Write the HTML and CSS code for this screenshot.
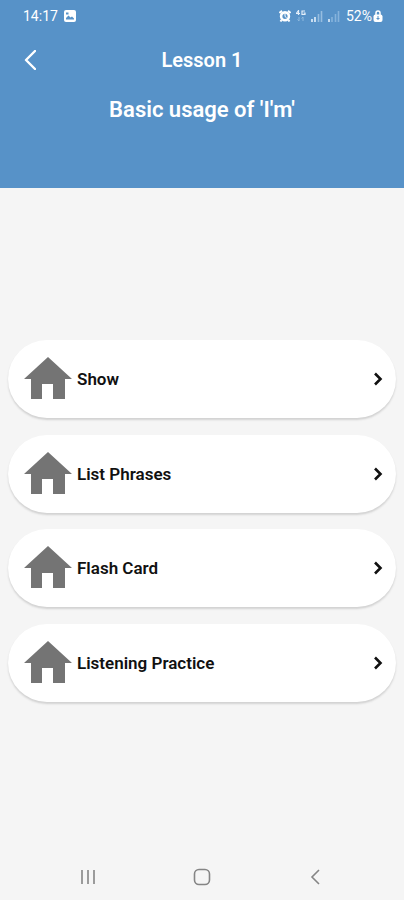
FILE: index.html
```
<!DOCTYPE html>
<html lang="en">
<head>
<meta charset="utf-8">
<meta name="viewport" content="width=device-width, initial-scale=1">
<title>Lesson 1</title>
<link rel="stylesheet" href="styles.css">
</head>
<body>
<svg class="defs" aria-hidden="true">
  <symbol id="house" viewBox="0 0 48 44"><path d="M24 0 48 22H41V42H29V27H18V42H7V22H0Z" fill="currentColor"/></symbol>
  <symbol id="chevron" viewBox="0 0 10 14"><path d="M2 1.500 7.500 7 2 12.500" fill="none" stroke="currentColor" stroke-width="2.600"/></symbol>
</svg>
<header class="header">
  <div class="status">
    <span>14:17</span>
    <svg class="picture" width="12" height="12" viewBox="0 0 12 12" aria-hidden="true"><rect width="12" height="12" rx="2" fill="#fff"/><path d="M2 9.500V8L4.500 5.500 6.500 7.500 8 6.500 10 8.500V9.500Z" fill="#5792c8"/><rect x="2" y="2.500" width="2.500" height="2" fill="#5792c8"/></svg>
    <span class="signals">
      <svg width="12" height="12" viewBox="0 0 12 12" aria-hidden="true"><path d="M.5 3 3 .8M11.500 3 9 .8M2.500 10 1.500 11.500M9.500 10l1 1.500" stroke="#fff" stroke-width="2"/><circle cx="6" cy="6.300" r="3.900" fill="none" stroke="#fff" stroke-width="2.600"/><path d="M6 4V6.500L7.500 7.500" fill="none" stroke="#fff"/></svg>
      <svg width="10" height="12" viewBox="0 0 10 12" aria-hidden="true"><path d="M2.500 0V5M0 3.500H4M.5 3 2.500.5M9 1H6V4.500H9V3H7.500" fill="none" stroke="#e4effa" stroke-width="1.200"/><path d="M3 7V11M1.500 9.500 3 11M7 11V7M5.500 8.500 7 7" fill="none" stroke="#8fb9de"/></svg>
      <svg width="12" height="12" viewBox="0 0 12 12" aria-hidden="true"><path d="M1 12V9M4 12V7" stroke="#e4effa" stroke-width="1.600"/><path d="M7.500 12V4M10.500 12V1" stroke="#96bde0" stroke-width="1.600"/></svg>
      <svg width="12" height="12" viewBox="0 0 12 12" aria-hidden="true"><path d="M1 12V9" stroke="#e4effa" stroke-width="1.600"/><path d="M4 12V7M7.500 12V4M10.500 12V1" stroke="#86b3dc" stroke-width="1.600"/></svg>
    </span>
    <span class="battery">52%<svg width="10" height="12" viewBox="0 0 9 12" aria-hidden="true"><path d="M2.500 5V3Q2.500 1 4.500 1T6.500 3V5" fill="none" stroke="#fff" stroke-width="1.500"/><rect y="4.500" width="9" height="7.500" rx="2" fill="#fff"/><path d="M4.500 6V10M3 8.500H6" stroke="#5792c8"/></svg></span>
  </div>
  <div class="bar">
    <button class="back" type="button" aria-label="Back"><svg width="12" height="20" viewBox="0 0 12 20" aria-hidden="true"><path d="M11 1 2 10 11 19" fill="none" stroke="#fff" stroke-width="2.400" stroke-linecap="round" stroke-linejoin="round"/></svg></button>
    <h1 class="lesson">Lesson 1</h1>
  </div>
  <h2 class="topic">Basic usage of 'I'm'</h2>
</header>
<main class="main">
  <nav class="list" aria-label="Activities">
    <a class="card" href="#show"><svg class="house"><use href="#house"/></svg><span>Show</span><svg class="chevron"><use href="#chevron"/></svg></a>
    <a class="card" href="#phrases"><svg class="house"><use href="#house"/></svg><span>List Phrases</span><svg class="chevron"><use href="#chevron"/></svg></a>
    <a class="card" href="#cards"><svg class="house"><use href="#house"/></svg><span>Flash Card</span><svg class="chevron"><use href="#chevron"/></svg></a>
    <a class="card" href="#listening"><svg class="house"><use href="#house"/></svg><span>Listening Practice</span><svg class="chevron"><use href="#chevron"/></svg></a>
  </nav>
</main>
<footer class="system">
  <button type="button" aria-label="Recent apps"><svg width="18" height="18" viewBox="0 0 18 18" aria-hidden="true"><path d="M3 2V16M9 2V16M15 2V16" stroke="#858585" stroke-width="1.600"/></svg></button>
  <button type="button" aria-label="Home"><svg width="18" height="18" viewBox="0 0 18 18" aria-hidden="true"><rect x="1.500" y="1.500" width="15" height="15" rx="4.500" fill="none" stroke="#858585" stroke-width="1.600"/></svg></button>
  <button type="button" aria-label="Back"><svg width="18" height="18" viewBox="0 0 18 18" aria-hidden="true"><path d="M12 2 5 9 12 16" fill="none" stroke="#858585" stroke-width="1.600"/></svg></button>
</footer>
</body>
</html>
```
FILE: styles.css
```
* {
  box-sizing: border-box;
}

body {
  margin: 0;
  min-height: 100vh;
  display: flex;
  flex-direction: column;
  background: #f5f5f5;
  font-family: Roboto, sans-serif;
}

button {
  padding: 0;
  border: 0;
  background: none;
  display: flex;
  align-items: center;
  justify-content: center;
}

.defs {
  display: none;
}

.header {
  min-height: 188px;
  background: #5792c8;
  color: #fff;
}

.status {
  height: 32px;
  padding: 0 21px 0 23px;
  display: flex;
  align-items: center;
  gap: 6px;
  font-size: 14px;
}

.signals {
  margin-left: auto;
  display: flex;
  gap: 5px;
}

.battery {
  display: flex;
  align-items: center;
  gap: 1px;
}

.bar {
  height: 56px;
  padding: 0 16px;
  display: grid;
  grid-template-columns: 28px 1fr 28px;
  align-items: center;
}

.back {
  height: 40px;
}

.lesson,
.topic {
  margin: 0;
  text-align: center;
  font-weight: 600;
}

.lesson {
  font-size: 20px;
  line-height: 24px;
}

.topic {
  padding: 8px 16px;
  font-size: 22px;
  line-height: 28px;
}

.main {
  flex: 1;
  padding: 0 8px;
  display: flex;
  flex-direction: column;
  justify-content: center;
}

.list {
  min-height: 362px;
  display: flex;
  flex-direction: column;
  justify-content: space-between;
}

.card {
  height: 78px;
  padding: 0 13px 0 16px;
  display: flex;
  align-items: center;
  gap: 5px;
  border-radius: 39px;
  background: #fff;
  box-shadow: 0 2px 2px #d2d2d2;
  color: #111;
  font-size: 17px;
  font-weight: 600;
  text-decoration: none;
}

.house {
  width: 48px;
  height: 44px;
  color: #747474;
}

.chevron {
  width: 10px;
  height: 14px;
  margin-left: auto;
}

.system {
  height: 46px;
  padding: 0 31px;
  display: grid;
  grid-template-columns: repeat(3, 1fr);
}
```
